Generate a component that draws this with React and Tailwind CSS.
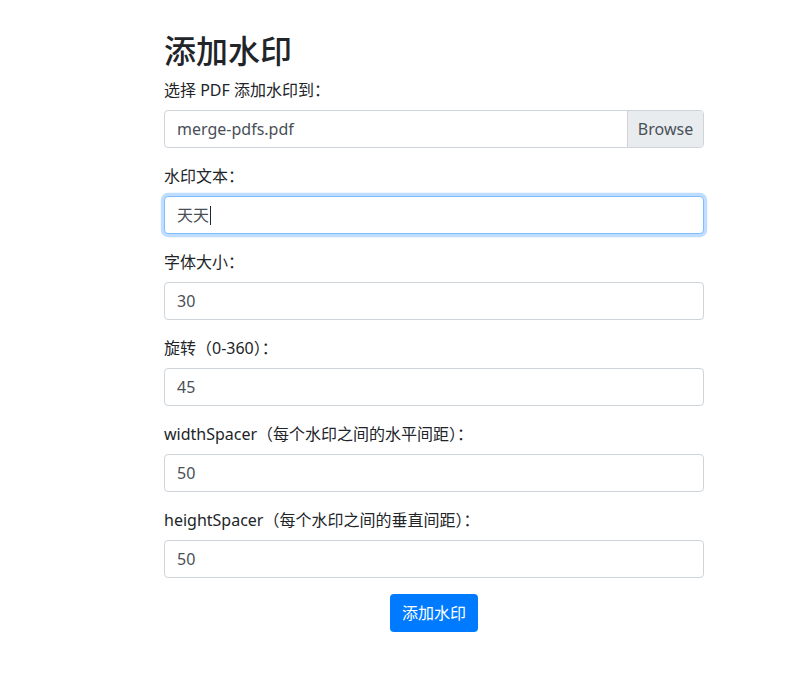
import React from "react";

const font = { fontFamily: '"Noto Sans", "Noto Sans CJK SC", sans-serif' };

function Field({ label, value, focused, caret }) {
  return (
    <div className="mb-4">
      <div className="mb-2 text-[16px] leading-[24px] text-[#212529]">{label}</div>
      <div
        className={
          "flex h-[38px] items-center rounded-[4px] border bg-white px-3 text-[16px] text-[#495057] " +
          (focused
            ? "border-[#80bdff] shadow-[0_0_0_3.2px_rgba(0,123,255,0.25)]"
            : "border-[#ced4da]")
        }
      >
        <span>{value}</span>
        {caret && <span className="ml-[1px] inline-block h-[19px] w-px bg-[#212529]" />}
      </div>
    </div>
  );
}

export default function App() {
  return (
    <div className="min-h-[684px] bg-white" style={font}>
      <div className="ml-[164px] w-[540px] pt-8">
        <h2 className="mb-2 text-[32px] font-medium leading-[38.4px] text-[#212529]">添加水印</h2>
        <div className="mb-4">
          <div className="mb-2 text-[16px] leading-[24px] text-[#212529]">选择 PDF 添加水印到：</div>
          <div className="flex h-[38px] overflow-hidden rounded-[4px] border border-[#ced4da] bg-white text-[16px] text-[#495057]">
            <div className="flex flex-1 items-center px-3">merge-pdfs.pdf</div>
            <div className="flex w-[76px] items-center justify-center border-l border-[#ced4da] bg-[#e9ecef]">Browse</div>
          </div>
        </div>
        <Field label="水印文本：" value="天天" focused caret />
        <Field label="字体大小：" value="30" />
        <Field label="旋转（0-360）：" value="45" />
        <Field label="widthSpacer（每个水印之间的水平间距）：" value="50" />
        <Field label="heightSpacer（每个水印之间的垂直间距）：" value="50" />
        <div className="flex justify-center">
          <button className="h-[38px] rounded-[4px] bg-[#007bff] px-3 text-[16px] text-white">添加水印</button>
        </div>
      </div>
    </div>
  );
}
